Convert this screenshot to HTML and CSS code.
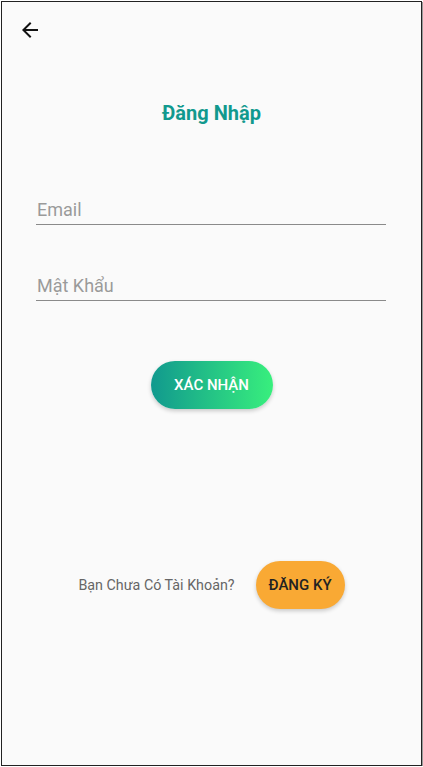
FILE: index.html
```html
<!DOCTYPE html>
<html lang="vi">
<head>
<meta charset="utf-8">
<link rel="stylesheet" href="styles.css">
</head>
<body>
<div class="frame">
  <div class="topbar">
    <svg class="back" width="24" height="24" viewBox="0 0 24 24"><path d="M20 11H7.83l5.59-5.59L12 4l-8 8 8 8 1.41-1.41L7.83 13H20v-2z" fill="#111"/></svg>
  </div>
  <h1 class="title">Đăng Nhập</h1>
  <div class="form">
    <div class="field"><span class="placeholder">Email</span></div>
    <div class="field"><span class="placeholder">Mật Khẩu</span></div>
  </div>
  <div class="submit-row">
    <button class="btn-submit">XÁC NHẬN</button>
  </div>
  <div class="register-row">
    <span class="question">Bạn Chưa Có Tài Khoản?</span>
    <button class="btn-register">ĐĂNG KÝ</button>
  </div>
</div>
</body>
</html>
```
FILE: styles.css
```css
html, body {
  margin: 0;
  padding: 0;
  background: #ffffff;
}
body {
  font-family: Roboto, "Noto Sans", sans-serif;
}
.frame {
  box-sizing: border-box;
  width: 421px;
  height: 765px;
  margin: 1px 0 0 1px;
  border: 1px solid #222;
  background: #fafafa;
  box-shadow: 1px 1px 0 #9a9a9a;
  display: flex;
  flex-direction: column;
}
.topbar {
  height: 40px;
  padding: 16px 0 0 16px;
  box-sizing: border-box;
}
.back {
  display: block;
}
.title {
  margin: 59px 0 0;
  text-align: center;
  font-size: 20px;
  font-weight: 700;
  line-height: 24px;
  color: #11998e;
}
.form {
  margin: 51px 35px 0 34px;
  display: flex;
  flex-direction: column;
  gap: 27px;
}
.field {
  height: 49px;
  border-bottom: 1.5px solid #8a8a8a;
  display: flex;
  align-items: flex-end;
  box-sizing: border-box;
  padding-bottom: 3px;
}
.placeholder {
  font-size: 18px;
  color: #9a9a9a;
  line-height: 22px;
  padding-left: 1px;
}
.submit-row {
  display: flex;
  justify-content: center;
  margin-top: 60px;
}
.btn-submit {
  width: 122px;
  height: 48px;
  border: none;
  border-radius: 24px;
  background: linear-gradient(90deg, #11998e, #38ef7d);
  color: #fff;
  font-family: Roboto, "Noto Sans", sans-serif;
  font-weight: 500;
  font-size: 15px;
  box-shadow: 0 2px 4px rgba(0,0,0,0.2);
}
.register-row {
  display: flex;
  justify-content: center;
  align-items: center;
  gap: 21px;
  margin-top: 152px;
}
.question {
  font-size: 14.3px;
  color: #666;
}
.btn-register {
  width: 89px;
  height: 48px;
  border: none;
  border-radius: 24px;
  background: #f9a934;
  color: #222;
  font-family: Roboto, "Noto Sans", sans-serif;
  font-weight: 500;
  font-size: 15px;
  box-shadow: 0 2px 4px rgba(0,0,0,0.2);
}
```
